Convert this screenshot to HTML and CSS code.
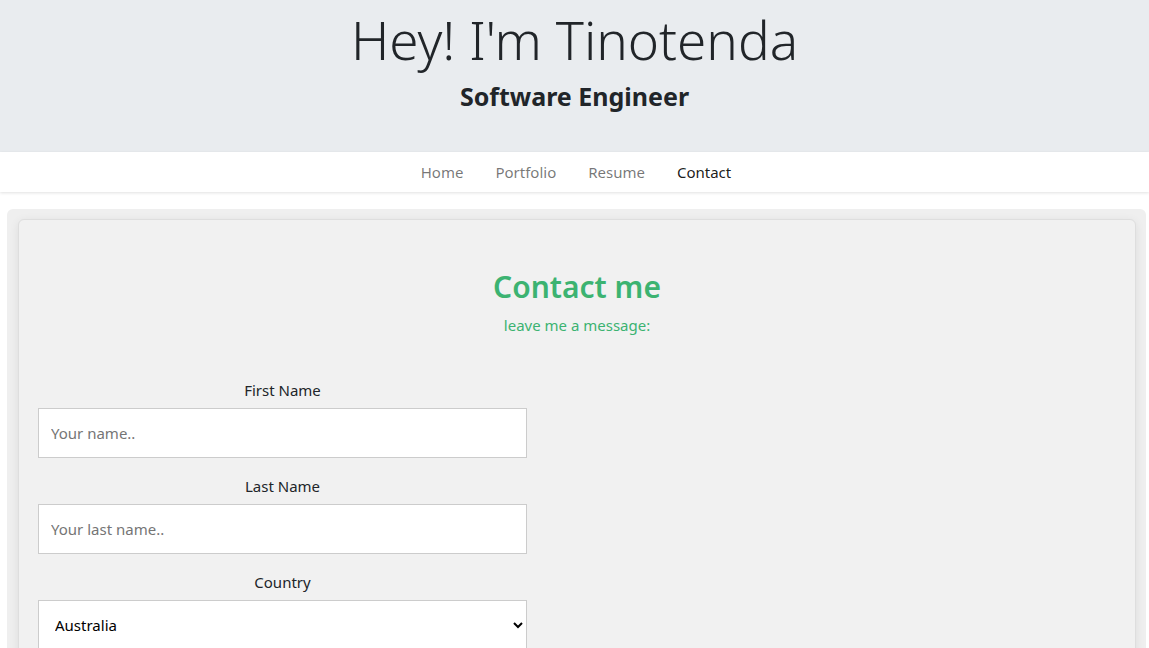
FILE: index.html
```html
<!DOCTYPE html>
<html lang="en">
<head>
<meta charset="utf-8">
<title>Tinotenda - Contact</title>
<link rel="stylesheet" href="styles.css">
</head>
<body>
<header class="hero">
  <h1 class="hero-title">Hey! I'm Tinotenda</h1>
  <h2 class="hero-sub">Software Engineer</h2>
</header>
<nav class="nav">
  <a class="nav-link" href="#">Home</a>
  <a class="nav-link" href="#">Portfolio</a>
  <a class="nav-link" href="#">Resume</a>
  <a class="nav-link active" href="#">Contact</a>
</nav>
<main class="wrap">
  <section class="card">
    <h2 class="card-title">Contact me</h2>
    <p class="card-sub">leave me a message:</p>
    <form class="form">
      <label class="field-label" for="fname">First Name</label>
      <input class="field" id="fname" type="text" placeholder="Your name..">
      <label class="field-label" for="lname">Last Name</label>
      <input class="field" id="lname" type="text" placeholder="Your last name..">
      <label class="field-label" for="country">Country</label>
      <select class="field select" id="country">
        <option>Australia</option>
        <option>Canada</option>
        <option>USA</option>
      </select>
    </form>
  </section>
</main>
</body>
</html>
```
FILE: styles.css
```css
* { box-sizing: border-box; }
body {
  margin: 0;
  font-family: "Noto Sans", "Open Sans", sans-serif;
  color: #212529;
  background: #fff;
}
.hero {
  background: #e9ecef;
  height: 152px;
  padding-top: 6px;
  text-align: center;
}
.hero-title {
  margin: 0;
  font-size: 53px;
  font-weight: 300;
  line-height: 67px;
}
.hero-sub {
  margin: 9px 0 0;
  font-size: 25px;
  font-weight: 700;
  line-height: 29px;
}
.nav {
  height: 40px;
  display: flex;
  justify-content: center;
  align-items: center;
  padding-left: 3px;
  background: #fff;
  box-shadow: 0 1px 3px rgba(0,0,0,0.12);
  position: relative;
}
.nav-link {
  padding: 0 16px;
  font-size: 15px;
  color: rgba(0,0,0,0.55);
  text-decoration: none;
}
.nav-link.active { color: rgba(0,0,0,0.9); }
.wrap {
  margin: 17px 3px 0 7px;
  padding: 10px 10px 0 11px;
  background: #efefef;
  border-radius: 6px 6px 0 0;
}
.card {
  background: #f1f1f1;
  border: 1px solid #dedede;
  border-radius: 6px;
  box-shadow: 0 2px 10px rgba(0,0,0,0.08);
  padding: 48px 19px 40px;
  text-align: center;
}
.card-title {
  margin: 0;
  font-size: 30px;
  font-weight: 600;
  line-height: 38px;
  color: #3cb371;
}
.card-sub {
  margin: 8px 0 0;
  font-size: 15px;
  line-height: 22px;
  color: #3cb371;
}
.form {
  width: 489px;
  margin-top: 43px;
  display: flex;
  flex-direction: column;
}
.field-label {
  font-size: 15px;
  line-height: 22px;
  margin-bottom: 7px;
}
.field {
  height: 50px;
  border: 1px solid #ccc;
  border-radius: 0;
  background: #fff;
  padding: 0 12px;
  font-family: inherit;
  font-size: 15px;
  margin-bottom: 17px;
}
.field::placeholder { color: #757575; }
.select {
  padding: 0 12px 0 12px;
  color: #000;
}
```
